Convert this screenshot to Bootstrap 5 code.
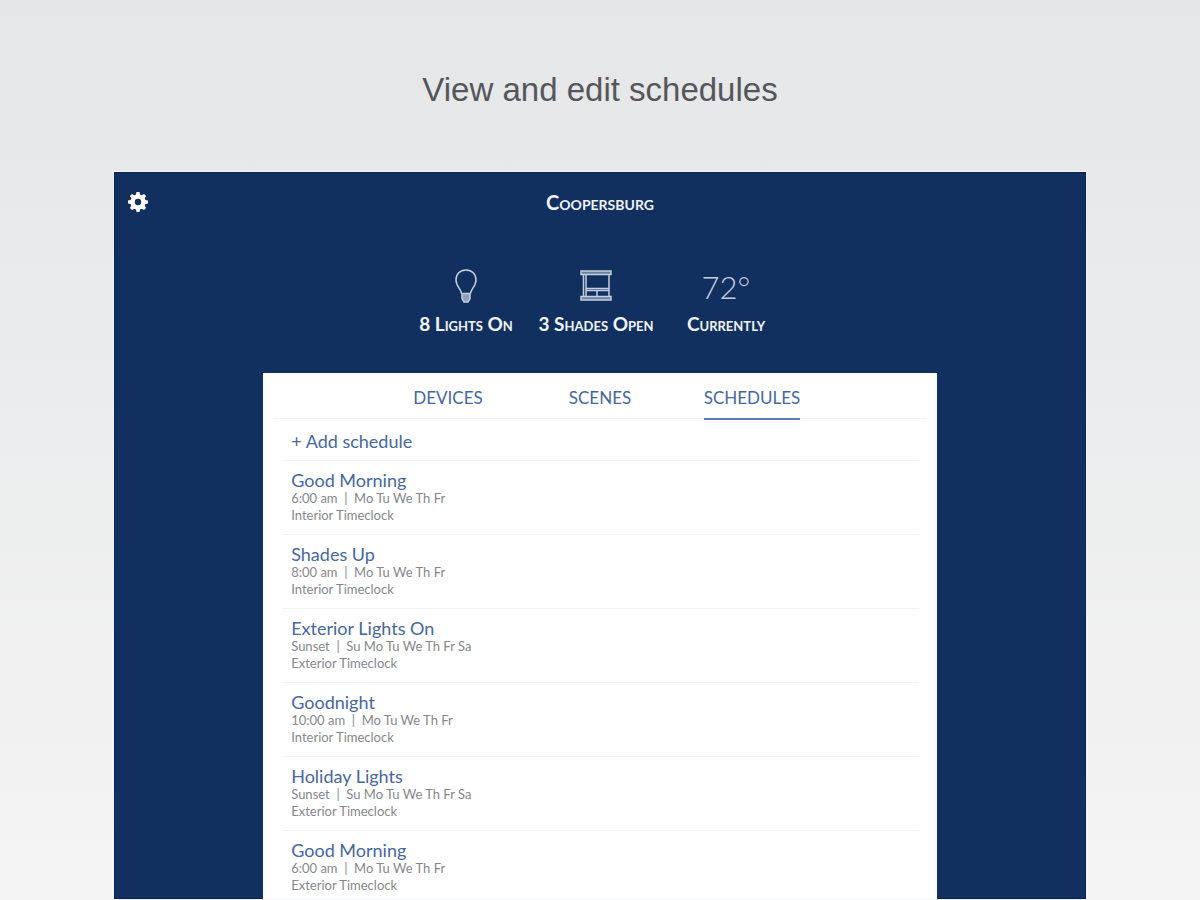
<!DOCTYPE html>
<html lang="en">
<head>
<meta charset="utf-8">
<meta name="viewport" content="width=device-width, initial-scale=1">
<title>View and edit schedules</title>
<link href="https://cdn.jsdelivr.net/npm/bootstrap@5.3.0/dist/css/bootstrap.min.css" rel="stylesheet">
<style>
  :root { --navy: #12305f; --link: #46679f; --hair: #f3f3f4; }
  body { font-family: Lato, sans-serif; background: linear-gradient(#e5e6e8, #f4f4f4); }
  .headline { font: 400 33px/40px "Liberation Sans", sans-serif; color: #55565a; padding: 70px 0 62px; }
  .app-panel { width: 81%; margin-bottom: 1px; background: var(--navy); box-shadow: inset 0 0 0 1px #06235a, 0 0 0 1px #f3f4f6; }
  .app-bar { display: grid; grid-template-columns: 1fr auto 1fr; height: 60px; padding: 0 14px; }
  .caps { font-variant: small-caps; font-weight: 700; font-size: 19px; line-height: 20px; color: #f0f3f8; }
  .app-bar .caps { font-size: 20px; }
  .stats-grid { display: grid; grid-template-columns: repeat(3, 130px); padding: 36px 8px 39px 0; }
  .stat-icon { height: 38px; color: #c3cede; }
  .stat-temp { font-size: 31px; font-weight: 300; line-height: 38px; }
  .sheet { width: 69.3%; }
  .tab-bar { margin: 0 10px; border-bottom: 1px solid var(--hair); }
  .tab-grid { display: grid; grid-template-columns: repeat(3, 152px); }
  .tab-grid a { color: var(--link); font-size: 17px; line-height: 20px; padding: 15px 0 10px; margin-bottom: -2px; border-bottom: 2px solid transparent; }
  .tab-grid a.active { border-color: #5c7db4; }
  .schedule-list { margin: 0 18px 0 20px; }
  .schedule-list li { border-bottom: 1px solid var(--hair); padding: 9px 8px 10px; }
  .schedule-list li:last-child { border: 0; padding-bottom: 4px; }
  .schedule-list li:first-child { padding: 12px 8px 9px; }
  .row-link { font-size: 18px; line-height: 20px; color: var(--link); }
  .detail { font-size: 13px; line-height: 17px; color: #85878b; }
</style>
</head>
<body>
<div class="min-vh-100 d-flex flex-column align-items-center">
  <h1 class="headline m-0 text-center">View and edit schedules</h1>
  <main class="app-panel flex-grow-1 d-flex flex-column align-items-center">
    <header class="app-bar w-100 align-items-center text-white">
      <button type="button" class="btn p-0 border-0 text-white d-flex" aria-label="Settings">
        <svg width="20" height="20" viewBox="0 0 20 20" fill="currentColor" fill-rule="evenodd" aria-hidden="true"><path d="M8.500 0h3l.5 2.500 1.700.7L16 1.900 18.100 4l-1.400 2.200.7 1.800 2.600.5v3l-2.600.5-.7 1.800 1.400 2.200-2.100 2.100-2.300-1.300-1.700.7-.5 2.500h-3L8 17.500l-1.700-.7L4 18.100 1.900 16l1.400-2.200-.7-1.800L0 11.500v-3L2.600 8l.7-1.800L1.900 4 4 1.900l2.300 1.300L8 2.500zM10 6.800a3.200 3.200 0 1 0 0 6.400 3.200 3.200 0 0 0 0-6.400z"/></svg>
      </button>
      <h2 class="caps m-0">Coopersburg</h2>
    </header>
    <section class="stats-grid text-center text-white" aria-label="Home status">
      <div>
        <div class="stat-icon mb-2">
          <svg width="24" height="36" viewBox="0 0 24 36" fill="none" stroke="currentColor" stroke-width="1.5" aria-hidden="true"><path d="M7.500 25.500c0-4-5.500-7-5.500-13.500C2 6 6 2 12 2s10 4 10 10c0 6.500-5.500 9.500-5.500 13.500"/><path d="M8 25.500h8v5L14 34h-4l-2-3.500z" fill="currentColor" fill-opacity=".7"/></svg>
        </div>
        <div class="caps">8 Lights On</div>
      </div>
      <div>
        <div class="stat-icon mb-2">
          <svg width="34" height="36" viewBox="0 0 34 36" fill="none" stroke="currentColor" stroke-width="1.5" aria-hidden="true"><path d="M2 3h30v3.500H2zM2 28.500h30V32H2z" fill="currentColor" fill-opacity=".5"/><path d="M4.500 6.500v22M7 6.500v22M30 6.500v22M7 20.500h23M7 22.500h23M18 22.500v6"/></svg>
        </div>
        <div class="caps">3 Shades Open</div>
      </div>
      <div>
        <div class="stat-icon stat-temp mb-2">72°</div>
        <div class="caps">Currently</div>
      </div>
    </section>
    <section class="sheet bg-white flex-grow-1">
      <nav class="tab-bar d-flex justify-content-center" aria-label="Sections">
        <div class="tab-grid text-center">
          <div class="d-flex justify-content-center"><a class="text-decoration-none" href="#devices">DEVICES</a></div>
          <div class="d-flex justify-content-center"><a class="text-decoration-none" href="#scenes">SCENES</a></div>
          <div class="d-flex justify-content-center"><a class="text-decoration-none active" href="#schedules" aria-current="page">SCHEDULES</a></div>
        </div>
      </nav>
      <ul class="schedule-list list-unstyled" id="schedules">
        <li><a class="row-link d-block text-decoration-none" href="#add">+ Add schedule</a></li>
        <li><a class="row-link d-block text-decoration-none" href="#s1">Good Morning</a><div class="detail">6:00 am&nbsp; |&nbsp; Mo Tu We Th Fr</div><div class="detail">Interior Timeclock</div></li>
        <li><a class="row-link d-block text-decoration-none" href="#s2">Shades Up</a><div class="detail">8:00 am&nbsp; |&nbsp; Mo Tu We Th Fr</div><div class="detail">Interior Timeclock</div></li>
        <li><a class="row-link d-block text-decoration-none" href="#s3">Exterior Lights On</a><div class="detail">Sunset&nbsp; |&nbsp; Su Mo Tu We Th Fr Sa</div><div class="detail">Exterior Timeclock</div></li>
        <li><a class="row-link d-block text-decoration-none" href="#s4">Goodnight</a><div class="detail">10:00 am&nbsp; |&nbsp; Mo Tu We Th Fr</div><div class="detail">Interior Timeclock</div></li>
        <li><a class="row-link d-block text-decoration-none" href="#s5">Holiday Lights</a><div class="detail">Sunset&nbsp; |&nbsp; Su Mo Tu We Th Fr Sa</div><div class="detail">Exterior Timeclock</div></li>
        <li><a class="row-link d-block text-decoration-none" href="#s6">Good Morning</a><div class="detail">6:00 am&nbsp; |&nbsp; Mo Tu We Th Fr</div><div class="detail">Exterior Timeclock</div></li>
      </ul>
    </section>
  </main>
</div>
<script src="https://cdn.jsdelivr.net/npm/bootstrap@5.3.0/dist/js/bootstrap.bundle.min.js"></script>
</body>
</html>
